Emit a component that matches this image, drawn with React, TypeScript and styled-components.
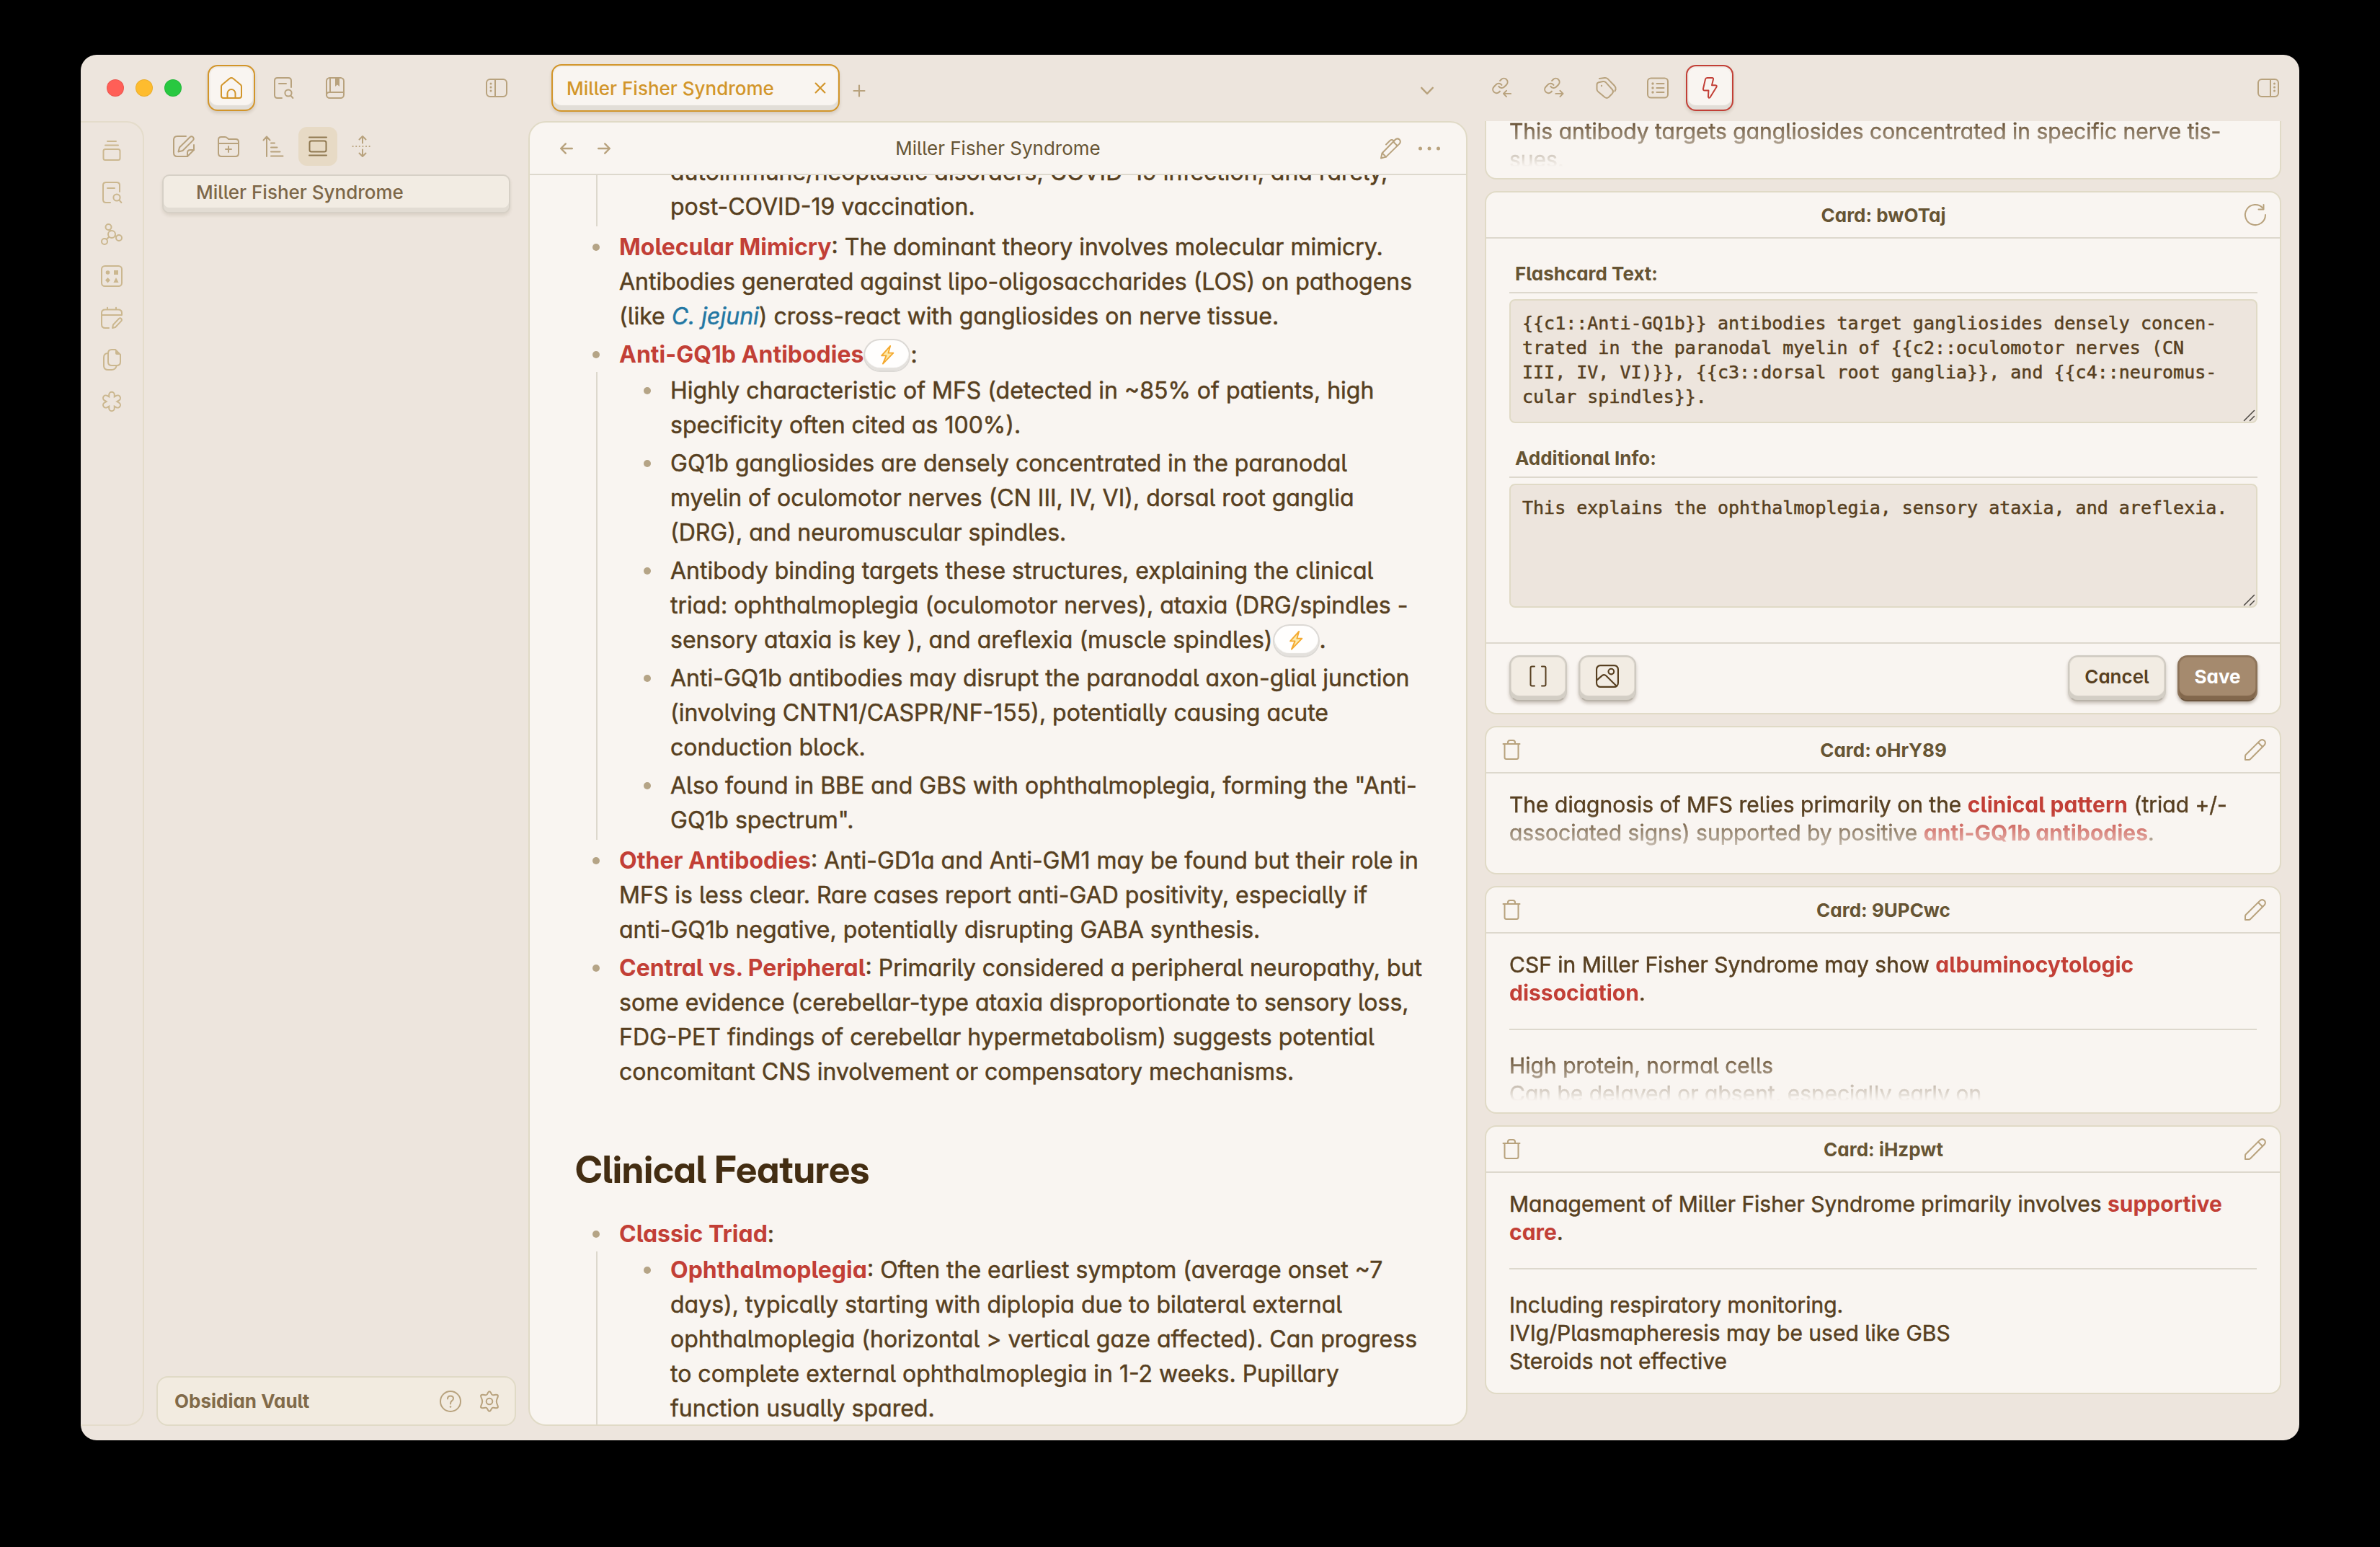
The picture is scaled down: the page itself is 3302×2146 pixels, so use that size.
import React, { useLayoutEffect, useRef } from "react";
import styled, { createGlobalStyle, css } from "styled-components";

const color = {
  base: "#ede5dd",
  panel: "#f9f5f1",
  raised: "#f2ece3",
  line: "#e0dac6",
  softLine: "#e4dccb",
  rule: "#ddd8cd",
  text: "#573f20",
  heading: "#432d12",
  muted: "#665433",
  nav: "#7d6748",
  icon: "#b8a27d",
  iconSoft: "#cbb78f",
  accent: "#d2952a",
  red: "#c23f36",
  blue: "#2277a3",
};

const GlobalStyle = createGlobalStyle`
  *, *::before, *::after { box-sizing: border-box; }
  body {
    margin: 0;
    background: #000;
    color: ${color.text};
    font-family: Inter, "Liberation Sans", sans-serif;
    font-feature-settings: "cv11", "cv05";
    font-size: 26px;
  }
  button, textarea { font: inherit; font-feature-settings: inherit; color: inherit; margin: 0; }
  ul { list-style: none; margin: 0; padding: 0; }
  h2, p { margin: 0; }
`;

/* Reading text is set regular with a hairline stroke for a sturdier colour. */
const sturdy = css`
  font-weight: 400;
  -webkit-text-stroke: 0.5px currentColor;
`;

/* ---------- icons ---------- */

const Svg = styled.svg<{ $size?: number; $weight?: number }>`
  display: block;
  flex: none;
  width: ${(p) => p.$size ?? 30}px;
  height: ${(p) => p.$size ?? 30}px;
  fill: none;
  stroke: currentColor;
  stroke-width: ${(p) => p.$weight ?? 2};
  stroke-linecap: round;
  stroke-linejoin: round;
  overflow: visible;
`;

type IconProps = { size?: number; weight?: number; children?: React.ReactNode };
const Icon = ({ size, weight, children }: IconProps) => (
  <Svg viewBox="0 0 30 30" $size={size} $weight={weight} aria-hidden="true">
    {children}
  </Svg>
);
const Spot = ({ x, y, r = 1.5 }: { x: number; y: number; r?: number }) => (
  <circle cx={x} cy={y} r={r} fill="currentColor" stroke="none" />
);

const HomeIcon = () => (
  <Icon>
    <path d="M1 13Q1 11.4 2.2 10.4L12.4 2Q15 0 17.6 2L27.8 10.4Q29 11.4 29 13V26Q29 29 26 29H4Q1 29 1 26Z" />
    <path d="M9.5 29V22.5A5.5 5.5 0 0 1 20.5 22.5V29" />
  </Icon>
);
const SearchDocIcon = () => (
  <Icon>
    <path d="M13 29H7Q3 29 3 25V5Q3 1 7 1H22Q26 1 26 5V14" />
    <path d="M9 9H19" />
    <circle cx="22" cy="22" r="4.6" />
    <path d="M25.4 25.6L28.4 29" />
  </Icon>
);
const BookIcon = () => (
  <Icon>
    <rect x="3" y="1" width="24" height="28" rx="4.5" />
    <path d="M8 1V21M3 25Q3 21 7 21H27" />
    <path d="M15 1H21V13L18 10.5L15 13Z" fill="currentColor" stroke="none" />
  </Icon>
);
const PanelLeftIcon = () => (
  <Icon>
    <rect x="1" y="3" width="28" height="24" rx="5" />
    <path d="M13 3V27" />
    <Spot x={7} y={9} />
    <Spot x={7} y={14} />
    <Spot x={7} y={19} />
  </Icon>
);
const PanelRightIcon = () => (
  <Icon>
    <rect x="1" y="3" width="28" height="24" rx="5" />
    <path d="M18 3V27" />
    <Spot x={23.5} y={9} />
    <Spot x={23.5} y={14} />
    <Spot x={23.5} y={19} />
  </Icon>
);
const StackIcon = () => (
  <Icon>
    <path d="M9 2H21M6 7.5H24" />
    <rect x="3.5" y="13" width="23" height="15" rx="2.5" />
  </Icon>
);
const GraphIcon = () => (
  <Icon>
    <circle cx="10.5" cy="5" r="4" />
    <circle cx="15" cy="15" r="5" />
    <circle cx="5" cy="25" r="4" />
    <circle cx="25" cy="20" r="4" />
    <path d="M12.2 8.8L13 10.4M11.4 18.5L7.8 22M19.6 17L21.4 18" />
  </Icon>
);
const ShapesIcon = () => (
  <Icon>
    <rect x="1" y="1" width="28" height="28" rx="4.5" />
    <g fill="currentColor" stroke="none">
      <circle cx="9.5" cy="10" r="2.8" />
      <rect x="18" y="7" width="6" height="6" />
      <path d="M9.5 17L13 20.7L9.5 24.4L6 20.7Z" />
      <path d="M21 17L24.6 24H17.4Z" />
    </g>
  </Icon>
);
const CalendarPenIcon = () => (
  <Icon>
    <path d="M11 29H6Q1 29 1 24V8Q1 3.5 6 3.5H24Q29 3.5 29 8V11H1M9 3V.8M21 3V.8" />
    <path d="M16 29L17 24.5L25 16Q26.8 14.6 28.3 16.1Q29.6 17.8 28.2 19.4L20 28Z" />
  </Icon>
);
const CopyIcon = () => (
  <Icon>
    <path d="M16 1H20L27 8V18Q27 23 22 23H15Q10 23 10 18V6Q10 1 15 1Z" />
    <path d="M10 6Q4 6 4 12V23Q4 29 10 29H15Q20 29 21.5 24" />
    <path d="M20 1L27 8H22Q20 8 20 6Z" fill="currentColor" stroke="none" />
  </Icon>
);
const AsteriskIcon = () => (
  <Icon>
    <g strokeWidth="9.5">
      <path d="M15 5.5V24.5M6.8 10.2L23.2 19.8M23.2 10.2L6.8 19.8" />
    </g>
    <g strokeWidth="5.5" stroke={color.base}>
      <path d="M15 5.5V24.5M6.8 10.2L23.2 19.8M23.2 10.2L6.8 19.8" />
    </g>
  </Icon>
);
const ComposeIcon = () => (
  <Icon>
    <path d="M18 1H6Q1 1 1 6V24Q1 29 6 29H20L29 20V13" />
    <path d="M20 29V24Q20 20 24 20H29" />
    <path d="M7.5 22.5L9 16.5L23.5 2.2Q25.6.4 27.8 2.2Q29.6 4.4 27.8 6.6L13.5 21Z" />
  </Icon>
);
const FolderPlusIcon = () => (
  <Icon>
    <path d="M1 11V6Q1 2 5 2H10Q12 2 13.5 3.6L15 5H25Q29 5 29 9V24.5Q29 29 24.5 29H5.5Q1 29 1 24.5V11H29" />
    <path d="M15 15V23M11 19H19" />
  </Icon>
);
const SortIcon = () => (
  <Icon>
    <path d="M6 29V2M1.5 6.5L6 1.5L10.5 6.5M12 10.5H17M12 16.5H20.5M12 22.5H24.5M12 28.5H28.5" />
  </Icon>
);
const GalleryIcon = () => (
  <Icon>
    <path d="M3 2.5H27M3 27.5H27" />
    <rect x="3.5" y="7.5" width="23" height="15" rx="2.5" />
  </Icon>
);
const ExpandIcon = () => (
  <Icon>
    <path d="M15 10.5V1.5M10.5 5.5L15 1L19.5 5.5M15 19.5V28.5M10.5 24.5L15 29L19.5 24.5" />
    <path d="M1.5 15H29" strokeDasharray="0.2 4.4" />
  </Icon>
);
const HelpIcon = () => (
  <Icon>
    <circle cx="15" cy="15" r="14" />
    <path d="M11 11.5Q11 7.5 15 7.5Q19 7.5 19 11Q19 13 16.8 14.4Q15 15.6 15 18.5" />
    <Spot x={15} y={22.5} r={1.3} />
  </Icon>
);
const GearIcon = () => (
  <Icon>
    <path d="M13 3Q15-.6 17 3L18.2 5.2Q19 6.4 20.6 6.2L24 5.8Q28 5.6 26.6 9L25.2 12.6Q24.4 15 25.2 17.4L26.6 21Q28 24.4 24 24.2L20.6 23.8Q19 23.6 18.2 24.8L17 27Q15 30.6 13 27L11.8 24.8Q11 23.6 9.4 23.8L6 24.2Q2 24.4 3.4 21L4.8 17.4Q5.6 15 4.8 12.6L3.4 9Q2 5.6 6 5.8L9.4 6.2Q11 6.4 11.8 5.2Z" />
    <circle cx="15" cy="15" r="4.3" />
  </Icon>
);
const chain = (
  <g transform="translate(-1 -1.5) scale(1.1)">
    <path d="M10 13a5 5 0 0 0 7.54.54l3-3a5 5 0 0 0-7.07-7.07l-1.72 1.71" />
    <path d="M14 11a5 5 0 0 0-7.54-.54l-3 3a5 5 0 0 0 7.07 7.07l1-1" />
  </g>
);
const LinkInIcon = () => (
  <Icon size={28}>
    {chain}
    <path d="M28 23.5H17.5M21.5 19L17 23.5L21.5 28" />
  </Icon>
);
const LinkOutIcon = () => (
  <Icon size={28}>
    {chain}
    <path d="M17.5 23.5H28M24 19L28.5 23.5L24 28" />
  </Icon>
);
const TagsIcon = () => (
  <Icon>
    <path d="M2.5 10.5Q2.5 8 5 7.2L11 6Q13.4 5.6 15 7.4L24 17.4Q26 20 24 22.6L19 27.8Q16.4 30 13.6 28L4.6 20.6Q2.6 19 2.5 17Z" />
    <path d="M6 2L13.5 1Q16 .8 17.6 2.4L27 12Q29.2 14.6 28.6 17L27.4 19.5" />
    <Spot x={9} y={12} r={1.2} />
  </Icon>
);
const ListIcon = () => (
  <Icon>
    <rect x="1" y="1.5" width="28" height="27" rx="4.5" />
    <path d="M13.5 9H23.5M13.5 15H23.5M13.5 21H23.5" />
    <Spot x={8} y={9} r={1.7} />
    <Spot x={8} y={15} r={1.7} />
    <Spot x={8} y={21} r={1.7} />
  </Icon>
);
const BoltIcon = () => (
  <Icon>
    <path d="M11.5 1H18.5Q20.4 1 20 3L18 11.2H23Q25.6 11.4 24.4 13.8L15.6 28Q13.4 30 13 27.2L13.4 18.4H8Q5.6 18.4 6 16L9 3Q9.6 1 11.5 1Z" />
  </Icon>
);
const CloseIcon = () => (
  <Icon size={16} weight={4}>
    <path d="M3 3L27 27M27 3L3 27" />
  </Icon>
);
const PlusIcon = () => (
  <Icon size={16} weight={4}>
    <path d="M15 1V29M1 15H29" />
  </Icon>
);
const ChevronIcon = () => (
  <Icon size={18} weight={4}>
    <path d="M2 8L15 21.5L28 8" />
  </Icon>
);
const BackIcon = () => (
  <Icon size={18} weight={4}>
    <path d="M28 15H2M13 4L2 15L13 26" />
  </Icon>
);
const ForwardIcon = () => (
  <Icon size={18} weight={4}>
    <path d="M2 15H28M17 4L28 15L17 26" />
  </Icon>
);
const PenIcon = () => (
  <Icon>
    <path d="M2 28.5L3.5 21.5L21.5 3Q24.5 0 27.6 2.6Q30.2 5.6 27.4 8.6L9 26.6Z" />
    <path d="M3.8 21.5L9 26.6M19 5.5L24.6 11.2M9 9.5L14.5 4Q16.5 2.4 19 3.6L20.6 4.2" />
  </Icon>
);
const MoreIcon = () => (
  <Icon>
    <Spot x={2.5} y={15} r={2.5} />
    <Spot x={15} y={15} r={2.5} />
    <Spot x={27.5} y={15} r={2.5} />
  </Icon>
);
const TrashIcon = () => (
  <Icon>
    <path d="M3.5 7H26.5M10 7V5Q10 2 13 2H17Q20 2 20 5V7M5.5 7V25.5Q5.5 28 8 28H22Q24.5 28 24.5 25.5V7" />
  </Icon>
);
const PencilIcon = () => (
  <Icon>
    <path d="M1 29V24Q1 22.8 2 21.8L21.5 2.4Q24.5-.2 27.6 2.4Q30.2 5.5 27.6 8.5L8.2 28Q7.2 29 6 29Z" />
    <path d="M19 5L25 11" />
  </Icon>
);
const RefreshIcon = () => (
  <Icon>
    <path d="M29 15A14 14 0 1 1 25.5 5.8" />
    <path d="M26.5 1V7.5H19.5" />
  </Icon>
);
const BracketsIcon = () => (
  <Icon>
    <path d="M10 1.5H6.5Q4.5 1.5 4.5 3.5V26.5Q4.5 28.5 6.5 28.5H10M20 1.5H23.5Q25.5 1.5 25.5 3.5V26.5Q25.5 28.5 23.5 28.5H20" />
  </Icon>
);
const ImageIcon = () => (
  <Icon size={32}>
    <rect x="1" y="1" width="28" height="28" rx="5" />
    <circle cx="20" cy="9" r="3.6" />
    <path d="M1.5 20L8.5 14Q11 12.2 13.5 14.5L27 28" />
  </Icon>
);
const SparkIcon = () => (
  <Icon size={28}>
    <path d="M19.5 2L6.5 16.5H13.5L8.5 28.5L24 12.5H16.5Z" fill="#fde9a9" stroke="#f4a92e" />
  </Icon>
);

/* ---------- window ---------- */

const Desktop = styled.div`
  height: 100vh;
  min-height: 900px;
  padding: 76px 112px 148px;
  background: #000;
`;
const Window = styled.div`
  height: 100%;
  display: flex;
  flex-direction: column;
  padding-bottom: 20px;
  overflow: hidden;
  border-radius: 22px;
  background: ${color.base};
`;
const TitleBar = styled.header`
  flex: none;
  height: 92px;
  display: grid;
  grid-template-columns: 621px minmax(0, 1fr) 1154px;
`;
const BarGroup = styled.div<{ $left: number; $right: number }>`
  display: flex;
  align-items: center;
  padding: 0 ${(p) => p.$right}px 0 ${(p) => p.$left}px;
`;
const Lights = styled.div`
  display: flex;
  gap: 16px;
  margin-right: 36px;
`;
const Light = styled.button<{ $color: string }>`
  width: 24px;
  height: 24px;
  padding: 0;
  border: 1px solid rgba(0, 0, 0, 0.08);
  border-radius: 50%;
  background: ${(p) => p.$color};
`;
const BarTabs = styled.div`
  display: flex;
  gap: 6px;
`;
const BarTab = styled.button<{ $active?: string }>`
  width: 66px;
  height: 64px;
  display: grid;
  place-items: center;
  padding: 0;
  border: 2px solid transparent;
  border-radius: 14px;
  background: transparent;
  color: ${color.icon};
  ${(p) =>
    p.$active &&
    css`
      border-color: ${p.$active};
      color: ${p.$active};
      background: ${color.panel};
      box-shadow: inset 0 -6px 1px #e2ded8, inset 0 0 0 2px #f1ede8, 0 3px 4px rgba(90, 70, 40, 0.18);
    `}
`;
const Spacer = styled.div`
  flex: 1;
`;
const IconButton = styled.button<{ $size?: number }>`
  display: grid;
  place-items: center;
  width: ${(p) => p.$size ?? 30}px;
  height: ${(p) => p.$size ?? 30}px;
  padding: 0;
  border: 0;
  background: transparent;
  color: ${color.icon};
`;
const Tab = styled.div`
  width: 400px;
  height: 66px;
  display: flex;
  align-items: center;
  justify-content: space-between;
  padding: 0 16px 0 19px;
  margin-right: 12px;
  border: 2px solid ${color.accent};
  border-radius: 14px;
  background: ${color.panel};
  color: ${color.accent};
  font-weight: 500;
  box-shadow: inset 0 -7px 1px #e2ded8, inset 0 0 0 2px #f3efea, 0 3px 4px rgba(90, 70, 40, 0.16);
  button { width: 18px; color: inherit; }
`;
const TabTools = styled.div`
  flex: 1;
  display: flex;
  justify-content: space-between;
  padding-top: 8px;
`;

const Workspace = styled.div`
  flex: 1;
  min-height: 0;
  display: grid;
  grid-template-columns: 88px 533px minmax(0, 1fr) 1154px;
`;
const Ribbon = styled.nav`
  display: flex;
  flex-direction: column;
  align-items: center;
  gap: 16px;
  padding-top: 18px;
  border: 2px solid ${color.softLine};
  border-left: 0;
  border-radius: 0 24px 24px 0;
  button { color: ${color.iconSoft}; }
`;

/* ---------- file explorer ---------- */

const Explorer = styled.aside`
  display: flex;
  flex-direction: column;
  padding: 8px 17px 0;
`;
const ExplorerTools = styled.div`
  display: flex;
  gap: 8px;
  padding: 0 11px;
  margin-bottom: 12px;
`;
const ToolButton = styled(IconButton)<{ $active?: boolean }>`
  border-radius: 12px;
  ${(p) =>
    p.$active &&
    css`
      background: #e7dac5;
      color: #8f7850;
    `}
`;
const FileList = styled.ul`
  flex: 1;
  padding: 0 8px;
`;
const FileLink = styled.a`
  display: block;
  height: 54px;
  padding: 0 45px;
  border: 2px solid #d6d0c6;
  border-radius: 10px;
  background: ${color.raised};
  color: ${color.nav};
  font-weight: 500;
  line-height: 46px;
  text-decoration: none;
  box-shadow: inset 0 -6px 0 #e2dcd3, 0 3px 4px rgba(90, 70, 40, 0.12);
`;
const Vault = styled.footer`
  height: 69px;
  display: flex;
  align-items: center;
  gap: 24px;
  padding: 0 20px 0 23px;
  border: 2px solid ${color.line};
  border-radius: 16px;
  background: #f2ebe0;
  color: #816a49;
  font-weight: 700;
`;

/* ---------- note ---------- */

const NotePane = styled.main`
  display: flex;
  flex-direction: column;
  min-width: 0;
  min-height: 0;
  overflow: hidden;
  border: 2px solid ${color.line};
  border-radius: 24px;
  background: ${color.panel};
`;
const NoteHeader = styled.div`
  flex: none;
  height: 73px;
  display: grid;
  grid-template-columns: 1fr auto 1fr;
  align-items: center;
  padding: 0 36px;
  border-bottom: 2px solid ${color.rule};
  color: ${color.muted};
`;
const HeaderTools = styled.div<{ $end?: boolean; $gap: number }>`
  display: flex;
  gap: ${(p) => p.$gap}px;
  justify-content: ${(p) => (p.$end ? "flex-end" : "flex-start")};
`;
const NoteScroll = styled.div`
  flex: 1;
  min-height: 0;
  overflow-y: auto;
  scrollbar-width: none;
  padding: 0 32px 0 63px;
  font-size: 32px;
  line-height: 48px;
  ${sturdy}
`;
const Bullets = styled.ul`
  padding-left: 24px;
`;
const NestedBullets = styled.ul`
  margin-left: -32px;
  padding-left: 64px;
  border-left: 2px solid ${color.rule};
`;
const BulletRow = styled.li`
  display: grid;
  grid-template-columns: 10px minmax(0, 1fr);
  column-gap: 27px;
  padding: 2px 0 3px;
`;
const BulletDot = styled.span<{ $hidden?: boolean }>`
  width: 10px;
  height: 10px;
  margin-top: 19px;
  border-radius: 50%;
  background: ${(p) => (p.$hidden ? "transparent" : "#b5a486")};
`;
const Term = styled.strong`
  color: ${color.red};
  font-weight: 700;
  -webkit-text-stroke: 0;
`;
const Species = styled.em`
  color: ${color.blue};
  -webkit-text-stroke: 0.5px ${color.blue};
`;
const Heading = styled.h2`
  margin: 78px 0 32px;
  color: ${color.heading};
  font-family: "Inter Display", Inter, sans-serif;
  font-size: 52px;
  font-weight: 700;
  line-height: 62px;
  -webkit-text-stroke: 0;
`;
const CardPill = styled.button`
  display: inline-grid;
  place-items: center;
  width: 65px;
  height: 46px;
  padding: 0 0 2px;
  vertical-align: bottom;
  border: 2px solid #dcd9d5;
  border-radius: 23px;
  background: #fffefd;
  box-shadow: inset 0 -4px 1px #e4e1dd;
`;

const Bullet = ({ children, nested, continued }: { children: React.ReactNode; nested?: React.ReactNode; continued?: boolean }) => (
  <BulletRow>
    <BulletDot $hidden={continued} />
    <div>
      <div>{children}</div>
      {nested && <NestedBullets>{nested}</NestedBullets>}
    </div>
  </BulletRow>
);
const OpenCard = () => (
  <CardPill aria-label="Open flashcard">
    <SparkIcon />
  </CardPill>
);

/* ---------- flashcards ---------- */

const CardScroll = styled.section`
  min-height: 0;
  display: flex;
  flex-direction: column;
  gap: 16px;
  overflow-y: auto;
  scrollbar-width: none;
  padding: 0 25px 44px 24px;
`;
const CardBox = styled.article`
  flex: none;
  border: 2px solid ${color.line};
  border-radius: 16px;
  background: ${color.panel};
`;
const CardHeader = styled.div`
  height: 64px;
  display: grid;
  grid-template-columns: 30px 1fr 30px;
  align-items: center;
  padding: 0 19px 0 20px;
  border-bottom: 2px solid ${color.rule};
  color: ${color.muted};
  font-weight: 700;
  text-align: center;
  button { grid-row: 1; grid-column: 3; }
  button:first-of-type:not(:last-of-type) { grid-column: 1; }
`;
const CardTitle = styled.span`
  grid-row: 1;
  grid-column: 2;
`;
const CardBody = styled.div<{ $faded?: boolean }>`
  margin: 24px 32px ${(p) => (p.$faded ? 12 : 24)}px;
  font-size: 30px;
  line-height: 39px;
  ${sturdy}
  ${(p) =>
    p.$faded &&
    css`
      max-height: 212px;
      padding-bottom: 24px;
      overflow: hidden;
      mask-image: linear-gradient(#000 calc(100% - 72px), transparent calc(100% - 4px));
    `}
`;
const CardRule = styled.hr`
  height: 2px;
  margin: 30px 0;
  border: 0;
  background: ${color.rule};
`;
const Form = styled.form`
  display: flex;
  flex-direction: column;
`;
const Fields = styled.div`
  display: flex;
  flex-direction: column;
  gap: 32px;
  padding: 32px 31px 48px 32px;
`;
const Field = styled.div`
  display: flex;
  flex-direction: column;
  label {
    padding: 0 8px 8px;
    margin-bottom: 8px;
    border-bottom: 2px solid ${color.rule};
    color: ${color.muted};
    font-weight: 700;
    line-height: 34px;
  }
  textarea {
    display: block;
    width: 100%;
    height: 172px;
    padding: 15px 16px;
    border: 2px solid ${color.line};
    border-radius: 8px;
    background: ${color.base};
    color: ${color.text};
    font-family: "DejaVu Sans Mono", "Liberation Mono", monospace;
    font-size: 25px;
    line-height: 34px;
    resize: none;
    outline: none;
    overflow: hidden;
    white-space: pre;
    ${sturdy}
  }
`;
const TextBox = styled.div`
  position: relative;
`;
const Grip = styled.span`
  position: absolute;
  right: 4px;
  bottom: 3px;
  color: #4a4640;
  cursor: ns-resize;
`;
const FormFooter = styled.div`
  display: flex;
  gap: 16px;
  padding: 16px 31px 16px 32px;
  border-top: 2px solid ${color.rule};
`;
const Key = styled.button<{ $width: number; $primary?: boolean }>`
  width: ${(p) => p.$width}px;
  height: 64px;
  display: grid;
  place-items: center;
  padding: 0 0 6px;
  border: 2px solid #cfcac1;
  border-radius: 14px;
  background: ${color.raised};
  color: ${color.text};
  font-weight: 600;
  box-shadow: inset 0 -6px 1px #d3cec5, inset 0 0 0 1px #e0dbd1, 0 3px 4px rgba(70, 50, 30, 0.25);
  border-bottom-color: #b9b3a9;
  ${(p) =>
    p.$primary &&
    css`
      border-color: #8b7258;
      border-bottom-color: #6b543d;
      background: #a58a6e;
      color: #fff;
      font-weight: 700;
      box-shadow: inset 0 -6px 1px #82674c, inset 0 0 0 1px #957a5f, 0 3px 4px rgba(70, 50, 30, 0.35);
    `}
`;

const TextField = ({ id, label, value }: { id: string; label: string; value: string }) => (
  <Field>
    <label htmlFor={id}>{label}</label>
    <TextBox>
      <textarea id={id} spellCheck={false} defaultValue={value} />
      <Grip>
        <Icon size={15} weight={3}>
          <path d="M1 29L29 1M17 29L29 17" />
        </Icon>
      </Grip>
    </TextBox>
  </Field>
);

const Flashcard = ({ id, faded, children }: { id: string; faded?: boolean; children: React.ReactNode }) => (
  <CardBox>
    <CardHeader>
      <IconButton aria-label="Delete card"><TrashIcon /></IconButton>
      <CardTitle>Card: {id}</CardTitle>
      <IconButton aria-label="Edit card"><PencilIcon /></IconButton>
    </CardHeader>
    <CardBody $faded={faded}>{children}</CardBody>
  </CardBox>
);

const ribbonIcons: [string, React.FC][] = [
  ["Review cards", StackIcon],
  ["Quick switcher", SearchDocIcon],
  ["Graph view", GraphIcon],
  ["Canvas", ShapesIcon],
  ["Daily note", CalendarPenIcon],
  ["Templates", CopyIcon],
  ["Commands", AsteriskIcon],
];
const explorerIcons: [string, React.FC][] = [
  ["New note", ComposeIcon],
  ["New folder", FolderPlusIcon],
  ["Sort order", SortIcon],
  ["Reveal current file", GalleryIcon],
  ["Expand all", ExpandIcon],
];

export default function App() {
  const note = useRef<HTMLDivElement>(null);
  const cards = useRef<HTMLElement>(null);

  useLayoutEffect(() => {
    if (note.current) note.current.scrollTop = 32;
    if (cards.current) cards.current.scrollTop = cards.current.scrollHeight;
  }, []);

  return (
    <Desktop>
      <GlobalStyle />
      <Window>
        <TitleBar>
          <BarGroup $left={36} $right={29}>
            <Lights>
              <Light $color="#ff5f57" aria-label="Close window" />
              <Light $color="#febc2e" aria-label="Minimise window" />
              <Light $color="#28c840" aria-label="Zoom window" />
            </Lights>
            <BarTabs>
              <BarTab $active={color.accent} aria-label="Files"><HomeIcon /></BarTab>
              <BarTab aria-label="Search"><SearchDocIcon /></BarTab>
              <BarTab aria-label="Bookmarks"><BookIcon /></BarTab>
            </BarTabs>
            <Spacer />
            <IconButton aria-label="Toggle left sidebar"><PanelLeftIcon /></IconButton>
          </BarGroup>
          <BarGroup $left={32} $right={41}>
            <Tab>
              Miller Fisher Syndrome
              <IconButton aria-label="Close tab"><CloseIcon /></IconButton>
            </Tab>
            <TabTools>
              <IconButton aria-label="New tab"><PlusIcon /></IconButton>
              <IconButton aria-label="Tab list"><ChevronIcon /></IconButton>
            </TabTools>
          </BarGroup>
          <BarGroup $left={15} $right={28}>
            <BarTabs>
              <BarTab aria-label="Backlinks"><LinkInIcon /></BarTab>
              <BarTab aria-label="Outgoing links"><LinkOutIcon /></BarTab>
              <BarTab aria-label="Tags"><TagsIcon /></BarTab>
              <BarTab aria-label="Outline"><ListIcon /></BarTab>
              <BarTab $active={color.red} aria-label="Flashcards"><BoltIcon /></BarTab>
            </BarTabs>
            <Spacer />
            <IconButton aria-label="Toggle right sidebar"><PanelRightIcon /></IconButton>
          </BarGroup>
        </TitleBar>

        <Workspace>
          <Ribbon>
            {ribbonIcons.map(([label, Glyph]) => (
              <IconButton key={label} $size={42} aria-label={label}><Glyph /></IconButton>
            ))}
          </Ribbon>

          <Explorer>
            <ExplorerTools>
              {explorerIcons.map(([label, Glyph]) => (
                <ToolButton key={label} $size={54} $active={Glyph === GalleryIcon} aria-label={label}><Glyph /></ToolButton>
              ))}
            </ExplorerTools>
            <FileList>
              <li><FileLink href="#note">Miller Fisher Syndrome</FileLink></li>
            </FileList>
            <Vault>
              Obsidian Vault
              <Spacer />
              <IconButton aria-label="Help"><HelpIcon /></IconButton>
              <IconButton aria-label="Settings"><GearIcon /></IconButton>
            </Vault>
          </Explorer>

          <NotePane>
            <NoteHeader>
              <HeaderTools $gap={22}>
                <IconButton aria-label="Back"><BackIcon /></IconButton>
                <IconButton aria-label="Forward"><ForwardIcon /></IconButton>
              </HeaderTools>
              <span>Miller Fisher Syndrome</span>
              <HeaderTools $end $gap={24}>
                <IconButton aria-label="Reading view"><PenIcon /></IconButton>
                <IconButton aria-label="More options"><MoreIcon /></IconButton>
              </HeaderTools>
            </NoteHeader>
            <NoteScroll ref={note} id="note">
              <Bullets>
                <Bullet
                  continued
                  nested={
                    <Bullet continued>
                      autoimmune/neoplastic disorders, COVID-19 infection, and rarely,<br />
                      post-COVID-19 vaccination.
                    </Bullet>
                  }
                >
                  {null}
                </Bullet>
                <Bullet>
                  <Term>Molecular Mimicry</Term>: The dominant theory involves molecular mimicry.<br />
                  Antibodies generated against lipo-oligosaccharides (LOS) on pathogens<br />
                  (like <Species>C. jejuni</Species>) cross-react with gangliosides on nerve tissue.
                </Bullet>
                <Bullet
                  nested={
                    <>
                      <Bullet>
                        Highly characteristic of MFS (detected in ~85% of patients, high<br />
                        specificity often cited as 100%).
                      </Bullet>
                      <Bullet>
                        GQ1b gangliosides are densely concentrated in the paranodal<br />
                        myelin of oculomotor nerves (CN III, IV, VI), dorsal root ganglia<br />
                        (DRG), and neuromuscular spindles.
                      </Bullet>
                      <Bullet>
                        Antibody binding targets these structures, explaining the clinical<br />
                        triad: ophthalmoplegia (oculomotor nerves), ataxia (DRG/spindles -<br />
                        sensory ataxia is key ), and areflexia (muscle spindles)<OpenCard />.
                      </Bullet>
                      <Bullet>
                        Anti-GQ1b antibodies may disrupt the paranodal axon-glial junction<br />
                        (involving CNTN1/CASPR/NF-155), potentially causing acute<br />
                        conduction block.
                      </Bullet>
                      <Bullet>
                        Also found in BBE and GBS with ophthalmoplegia, forming the "Anti-<br />
                        GQ1b spectrum".
                      </Bullet>
                    </>
                  }
                >
                  <Term>Anti-GQ1b Antibodies</Term><OpenCard />:
                </Bullet>
                <Bullet>
                  <Term>Other Antibodies</Term>: Anti-GD1a and Anti-GM1 may be found but their role in<br />
                  MFS is less clear. Rare cases report anti-GAD positivity, especially if<br />
                  anti-GQ1b negative, potentially disrupting GABA synthesis.
                </Bullet>
                <Bullet>
                  <Term>Central vs. Peripheral</Term>: Primarily considered a peripheral neuropathy, but<br />
                  some evidence (cerebellar-type ataxia disproportionate to sensory loss,<br />
                  FDG-PET findings of cerebellar hypermetabolism) suggests potential<br />
                  concomitant CNS involvement or compensatory mechanisms.
                </Bullet>
              </Bullets>
              <Heading>Clinical Features</Heading>
              <Bullets>
                <Bullet
                  nested={
                    <Bullet>
                      <Term>Ophthalmoplegia</Term>: Often the earliest symptom (average onset ~7<br />
                      days), typically starting with diplopia due to bilateral external<br />
                      ophthalmoplegia (horizontal &gt; vertical gaze affected). Can progress<br />
                      to complete external ophthalmoplegia in 1-2 weeks. Pupillary<br />
                      function usually spared.
                    </Bullet>
                  }
                >
                  <Term>Classic Triad</Term>:
                </Bullet>
              </Bullets>
            </NoteScroll>
          </NotePane>

          <CardScroll ref={cards}>
            <CardBox>
              <CardBody $faded>
                <br />
                <br />
                <CardRule />
                This antibody targets gangliosides concentrated in specific nerve tis-<br />
                sues.
              </CardBody>
            </CardBox>

            <CardBox>
              <CardHeader>
                <CardTitle>Card: bwOTaj</CardTitle>
                <IconButton aria-label="Reset card"><RefreshIcon /></IconButton>
              </CardHeader>
              <Form onSubmit={(e) => e.preventDefault()}>
                <Fields>
                  <TextField
                    id="card-text"
                    label="Flashcard Text:"
                    value={
                      "{{c1::Anti-GQ1b}} antibodies target gangliosides densely concen-\n" +
                      "trated in the paranodal myelin of {{c2::oculomotor nerves (CN\n" +
                      "III, IV, VI)}}, {{c3::dorsal root ganglia}}, and {{c4::neuromus-\n" +
                      "cular spindles}}."
                    }
                  />
                  <TextField
                    id="card-info"
                    label="Additional Info:"
                    value="This explains the ophthalmoplegia, sensory ataxia, and areflexia."
                  />
                </Fields>
                <FormFooter>
                  <Key type="button" $width={80} aria-label="Insert cloze"><BracketsIcon /></Key>
                  <Key type="button" $width={80} aria-label="Insert image"><ImageIcon /></Key>
                  <Spacer />
                  <Key type="button" $width={136}>Cancel</Key>
                  <Key type="submit" $width={111} $primary>Save</Key>
                </FormFooter>
              </Form>
            </CardBox>

            <Flashcard id="oHrY89" faded>
              The diagnosis of MFS relies primarily on the <Term>clinical pattern</Term> (triad +/-<br />
              associated signs) supported by positive <Term>anti-GQ1b antibodies</Term>.
            </Flashcard>

            <Flashcard id="9UPCwc" faded>
              CSF in Miller Fisher Syndrome may show <Term>albuminocytologic</Term><br />
              <Term>dissociation</Term>.
              <CardRule />
              High protein, normal cells<br />
              Can be delayed or absent, especially early on
            </Flashcard>

            <Flashcard id="iHzpwt">
              Management of Miller Fisher Syndrome primarily involves <Term>supportive</Term><br />
              <Term>care</Term>.
              <CardRule />
              Including respiratory monitoring.<br />
              IVIg/Plasmapheresis may be used like GBS<br />
              Steroids not effective
            </Flashcard>
          </CardScroll>
        </Workspace>
      </Window>
    </Desktop>
  );
}
